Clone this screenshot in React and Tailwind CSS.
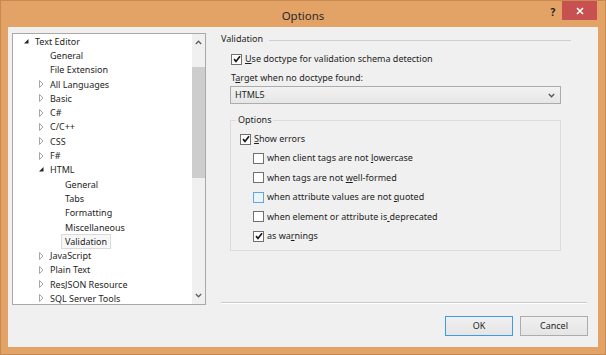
import { useState } from 'react';

const font = { fontFamily: '"Noto Sans", "Liberation Sans", sans-serif' };

const tree = [
  { label: 'Text Editor', level: 0, arrow: 'open' },
  { label: 'General', level: 1 },
  { label: 'File Extension', level: 1 },
  { label: 'All Languages', level: 1, arrow: 'closed' },
  { label: 'Basic', level: 1, arrow: 'closed' },
  { label: 'C#', level: 1, arrow: 'closed' },
  { label: 'C/C++', level: 1, arrow: 'closed' },
  { label: 'CSS', level: 1, arrow: 'closed' },
  { label: 'F#', level: 1, arrow: 'closed' },
  { label: 'HTML', level: 1, arrow: 'open' },
  { label: 'General', level: 2 },
  { label: 'Tabs', level: 2 },
  { label: 'Formatting', level: 2 },
  { label: 'Miscellaneous', level: 2 },
  { label: 'Validation', level: 2, selected: true },
  { label: 'JavaScript', level: 1, arrow: 'closed' },
  { label: 'Plain Text', level: 1, arrow: 'closed' },
  { label: 'ResJSON Resource', level: 1, arrow: 'closed' },
  { label: 'SQL Server Tools', level: 1, arrow: 'closed' },
];

function Arrow({ kind }) {
  if (kind === 'open')
    return (
      <svg width="7" height="7" viewBox="0 0 7 7">
        <path d="M5.5 1 L5.5 5.5 L1 5.5 Z" fill="#262626" />
      </svg>
    );
  return (
    <svg width="7" height="8" viewBox="0 0 7 8">
      <path d="M1.5 0.5 L5 4 L1.5 7.5 Z" fill="none" stroke="#a6a6a6" strokeWidth="1" />
    </svg>
  );
}

function TreeRow({ item }) {
  const pad = { 0: 'pl-[10px]', 1: 'pl-[25px]', 2: 'pl-[40px]' }[item.level];
  return (
    <div className={`flex items-center h-[14.3px] ${pad}`}>
      <span className="w-[8px] flex items-center shrink-0">{item.arrow && <Arrow kind={item.arrow} />}</span>
      <span
        className={`px-[3px] leading-[13px] whitespace-nowrap border ${
          item.selected ? 'bg-[#f7f7f7] border-[#dadada]' : 'border-transparent'
        }`}
      >
        {item.label}
      </span>
    </div>
  );
}

function Check({ checked, hover }) {
  return (
    <span
      className={`w-[11px] h-[11px] border shrink-0 flex items-center justify-center ${
        hover ? 'border-[#5fa6e8] bg-[#eaf4fd]' : 'border-[#707070] bg-white'
      }`}
    >
      {checked && (
        <svg width="8" height="8" viewBox="0 0 8 8">
          <path d="M1 4.1 L3 6.4 L7 1.2" fill="none" stroke="#1a1a1a" strokeWidth="1.7" />
        </svg>
      )}
    </span>
  );
}

function Label({ text, u }) {
  return (
    <span className="whitespace-nowrap">
      {text.slice(0, u)}
      <span className="underline underline-offset-1">{text[u]}</span>
      {text.slice(u + 1)}
    </span>
  );
}

function CheckRow({ checked, hover, text, u, className = '' }) {
  return (
    <div className={`flex items-center gap-[3px] h-[14px] ${className}`}>
      <Check checked={checked} hover={hover} />
      <Label text={text} u={u} />
    </div>
  );
}

export default function App() {
  const [value] = useState('HTML5');
  return (
    <div
      style={font}
      className="w-[606px] h-[355px] bg-[#e3a266] border border-[#c98a52] flex flex-col text-[9px] text-[#1e1e1e]"
    >
      {/* title bar */}
      <div className="h-[26px] flex items-start shrink-0">
        <div className="w-[57px]" />
        <div className="flex-1 flex justify-center pt-[6px] text-[11.5px] text-[#2a2a2a]">Options</div>
        <div className="w-[57px] flex items-start">
          <div className="w-[10px] pt-[4px] text-center text-[10px] font-bold text-[#1e1e1e]">?</div>
          <div className="w-[35px] h-[19px] ml-[4px] mr-[8px] bg-[#c75050] flex items-center justify-center">
            <svg width="8" height="8" viewBox="0 0 8 8">
              <path d="M1 1 L7 7 M7 1 L1 7" stroke="white" strokeWidth="1.6" />
            </svg>
          </div>
        </div>
      </div>

      {/* client */}
      <div className="flex-1 mx-[7px] mb-[7px] bg-[#f0f0f0] flex">
        {/* tree */}
        <div className="ml-[4px] mt-[6px] w-[194px] h-[272px] border border-[#a9a9a9] bg-white flex overflow-hidden">
          <div className="flex-1 overflow-hidden">
            {tree.map((t, i) => (
              <TreeRow key={i} item={t} />
            ))}
          </div>
          <div className="w-[13px] bg-[#f0f0f0] flex flex-col items-center">
            <div className="h-[17px] flex items-center justify-center">
              <svg width="7" height="5" viewBox="0 0 7 5">
                <path d="M0.8 4 L3.5 1.2 L6.2 4" fill="none" stroke="#606060" strokeWidth="1.3" />
              </svg>
            </div>
            <div className="w-full h-[111px] mt-[16px] bg-[#cdcdcd]" />
            <div className="flex-1" />
            <div className="h-[17px] flex items-center justify-center">
              <svg width="7" height="5" viewBox="0 0 7 5">
                <path d="M0.8 1 L3.5 3.8 L6.2 1" fill="none" stroke="#606060" strokeWidth="1.3" />
              </svg>
            </div>
          </div>
        </div>

        {/* right pane */}
        <div className="flex-1 ml-[15px] mr-[10px] flex flex-col">
          <div className="flex items-center mt-[5px] h-[14px]">
            <span>Validation</span>
            <div className="flex-1 ml-[6px] mr-[17px] h-[1px] bg-[#cfcfcf] mt-[3px]" />
          </div>

          <CheckRow checked text="Use doctype for validation schema detection" u={0} className="ml-[10px] mt-[6px]" />

          <div className="ml-[10px] mt-[5px] h-[14px] flex items-center">
            <Label text="Target when no doctype found:" u={1} />
          </div>

          <div className="ml-[9px] mr-[27px] mt-[1px] h-[18px] border border-[#acacac] bg-gradient-to-b from-[#f2f2f2] to-[#e6e6e6] flex items-center px-[4px]">
            <span className="flex-1">{value}</span>
            <svg width="7" height="5" viewBox="0 0 7 5" className="mr-[1px]">
              <path d="M0.8 1 L3.5 3.8 L6.2 1" fill="none" stroke="#555" strokeWidth="1.3" />
            </svg>
          </div>

          {/* options group */}
          <div className="ml-[9px] mr-[27px] mt-[16px] h-[131px] border border-[#dcdcdc] flex flex-col">
            <div className="-mt-[8px] ml-[5px] px-[2px] h-[14px] bg-[#f0f0f0] self-start flex items-center">Options</div>
            <CheckRow checked text="Show errors" u={0} className="ml-[9px] mt-[5px]" />
            <div className="ml-[22px] mt-[5px] flex flex-col gap-[5.5px]">
              <CheckRow text="when client tags are not lowercase" u={25} />
              <CheckRow text="when tags are not well-formed" u={18} />
              <CheckRow hover text="when attribute values are not quoted" u={30} />
              <CheckRow text="when element or attribute is deprecated" u={28} />
              <CheckRow checked text="as warnings" u={5} />
            </div>
          </div>

          <div className="flex-1" />
          <div className="h-[1px] bg-[#c9c9c9] border-b border-white box-content mr-[1px]" />
          <div className="flex justify-end gap-[7px] mt-[12px] mb-[11px]">
            <button className="w-[68px] h-[20px] border border-[#3c9ae8] bg-gradient-to-b from-[#f0f0f0] to-[#e5e5e5] text-[9px]">
              OK
            </button>
            <button className="w-[68px] h-[20px] border border-[#acacac] bg-gradient-to-b from-[#f0f0f0] to-[#e5e5e5] text-[9px]">
              Cancel
            </button>
          </div>
        </div>
      </div>
    </div>
  );
}
